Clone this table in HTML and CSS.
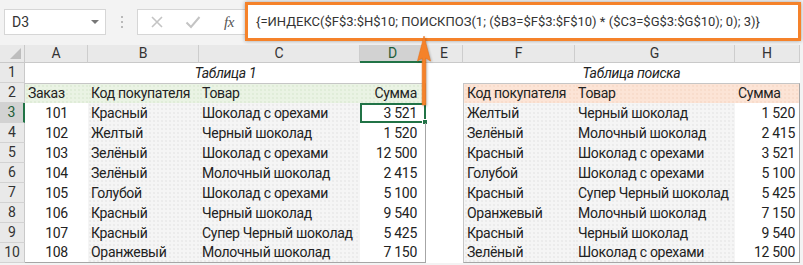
FILE: index.html
```html
<!DOCTYPE html>
<html lang="ru">
<head>
<meta charset="utf-8">
<link rel="stylesheet" href="styles.css">
</head>
<body>
<div class="app">
  <div class="toolbar">
    <div class="namebox"><span class="name">D3</span><span class="caret"></span></div>
    <div class="grip"><i></i><i></i><i></i></div>
    <div class="fxbox">
      <svg class="ico" width="14" height="14" viewBox="0 0 14 14"><path d="M2 2 L12 12 M12 2 L2 12" stroke="#c4c4c4" stroke-width="1.6" fill="none"/></svg>
      <svg class="ico" width="16" height="14" viewBox="0 0 16 14"><path d="M1.5 7.5 L6 12 L14.5 2" stroke="#c4c4c4" stroke-width="2" fill="none"/></svg>
      <span class="fx">fx</span>
    </div>
    <div class="formula">{=ИНДЕКС($F$3:$H$10; ПОИСКПОЗ(1; ($B3=$F$3:$F$10) * ($C3=$G$3:$G$10); 0); 3)}</div>
  </div>

  <div class="sheet">
    <div class="corner"><span class="tri"></span></div>
    <div class="ch">A</div><div class="ch">B</div><div class="ch">C</div><div class="ch sel">D</div><div class="ch">E</div><div class="ch">F</div><div class="ch">G</div><div class="ch">H</div>

    <div class="rh">1</div>
    <div class="c title t1span">Таблица 1</div>
    <div class="c"></div>
    <div class="c title t2span">Таблица поиска</div>

    <div class="rh">2</div>
    <div class="c g1 top">Заказ</div><div class="c g1 top">Код покупателя</div><div class="c g1 top">Товар</div><div class="c g1 top r1 num">Сумма</div>
    <div class="c"></div>
    <div class="c p2 top l2">Код покупателя</div><div class="c p2 top">Товар</div><div class="c p2 top r2">Сумма</div>

    <div class="rh sel">3</div>
    <div class="c ctr">101</div><div class="c dot">Красный</div><div class="c dot">Шоколад с орехами</div><div class="c num r1 active">3 521<span class="handle"></span></div>
    <div class="c"></div>
    <div class="c dot l2">Желтый</div><div class="c dot">Черный шоколад</div><div class="c num r2">1 520</div>

    <div class="rh">4</div>
    <div class="c ctr">102</div><div class="c dot">Желтый</div><div class="c dot">Черный шоколад</div><div class="c num r1">1 520</div>
    <div class="c"></div>
    <div class="c dot l2">Зелёный</div><div class="c dot">Молочный шоколад</div><div class="c num r2">2 415</div>

    <div class="rh">5</div>
    <div class="c ctr">103</div><div class="c dot">Зелёный</div><div class="c dot">Шоколад с орехами</div><div class="c num r1">12 500</div>
    <div class="c"></div>
    <div class="c dot l2">Красный</div><div class="c dot">Шоколад с орехами</div><div class="c num r2">3 521</div>

    <div class="rh">6</div>
    <div class="c ctr">104</div><div class="c dot">Зелёный</div><div class="c dot">Молочный шоколад</div><div class="c num r1">2 415</div>
    <div class="c"></div>
    <div class="c dot l2">Голубой</div><div class="c dot">Шоколад с орехами</div><div class="c num r2">5 100</div>

    <div class="rh">7</div>
    <div class="c ctr">105</div><div class="c dot">Голубой</div><div class="c dot">Шоколад с орехами</div><div class="c num r1">5 100</div>
    <div class="c"></div>
    <div class="c dot l2">Красный</div><div class="c dot">Супер Черный шоколад</div><div class="c num r2">5 425</div>

    <div class="rh">8</div>
    <div class="c ctr">106</div><div class="c dot">Красный</div><div class="c dot">Черный шоколад</div><div class="c num r1">9 540</div>
    <div class="c"></div>
    <div class="c dot l2">Оранжевый</div><div class="c dot">Молочный шоколад</div><div class="c num r2">7 150</div>

    <div class="rh">9</div>
    <div class="c ctr">107</div><div class="c dot">Красный</div><div class="c dot">Супер Черный шоколад</div><div class="c num r1">5 425</div>
    <div class="c"></div>
    <div class="c dot l2">Красный</div><div class="c dot">Черный шоколад</div><div class="c num r2">9 540</div>

    <div class="rh">10</div>
    <div class="c ctr bot">108</div><div class="c dot bot">Оранжевый</div><div class="c dot bot">Молочный шоколад</div><div class="c num r1 bot">7 150</div>
    <div class="c"></div>
    <div class="c dot l2 bot">Зелёный</div><div class="c dot bot">Шоколад с орехами</div><div class="c num r2 bot">12 500</div>
  </div>

  <svg class="arrow" width="24" height="74" viewBox="0 0 24 74">
    <path d="M12 1 L18.5 26 L13.8 23 L13.8 70 L10.2 70 L10.2 23 L5.5 26 Z" fill="#f5822a" stroke="#e9721a" stroke-width="0.6"/>
  </svg>
</div>
</body>
</html>
```
FILE: styles.css
```css
* { box-sizing: border-box; }
html, body { margin: 0; padding: 0; }
body {
  width: 803px;
  height: 265px;
  overflow: hidden;
  background: #f3f3f3;
  font-family: Roboto, "Noto Sans", sans-serif;
  font-size: 14px;
  letter-spacing: -0.3px;
  color: #222;
}
.app { position: relative; width: 803px; height: 265px; }

.toolbar {
  height: 45px;
  display: flex;
  align-items: flex-start;
  background: #f3f3f3;
}
.namebox {
  margin: 9px 0 0 4px;
  width: 102px;
  height: 26px;
  background: #fff;
  border: 1px solid #d6d6d6;
  display: flex;
  align-items: center;
  justify-content: space-between;
  padding: 0 6px 0 7px;
}
.name { font-size: 14px; color: #333; letter-spacing: 0; }
.caret {
  width: 0; height: 0;
  border-left: 4px solid transparent;
  border-right: 4px solid transparent;
  border-top: 4px solid #777;
}
.grip {
  width: 31px;
  height: 26px;
  margin-top: 9px;
  display: flex;
  flex-direction: column;
  align-items: center;
  justify-content: center;
  gap: 3px;
}
.grip i { display: block; width: 2px; height: 2px; background: #b9b9b9; }
.fxbox {
  margin-top: 9px;
  width: 108px;
  height: 26px;
  background: #fff;
  border: 1px solid #d6d6d6;
  border-right: none;
  display: flex;
  align-items: center;
  padding-left: 12px;
  gap: 21px;
}
.fx {
  font-family: "Liberation Serif", serif;
  font-style: italic;
  font-size: 15px;
  color: #555;
  letter-spacing: -0.5px;
  margin-left: 2px;
}
.formula {
  margin-top: 2px;
  width: 556px;
  height: 39px;
  background: #fff;
  border: 3px solid #f5822a;
  box-shadow: 0 0 4px rgba(0,0,0,0.35);
  padding: 0 0 0 8px;
  line-height: 33px;
  font-size: 13px;
  letter-spacing: 0;
  color: #333;
  white-space: nowrap;
}

.sheet {
  display: grid;
  grid-template-columns: 25px 63px 111px 161px 66px 37px 112px 160px 65px;
  grid-template-rows: 18px repeat(10, 20px);
  width: 800px;
  background: #fff;
}
.corner {
  background: #e9e9e9;
  border-right: 1px solid #c9c9c9;
  border-bottom: 1px solid #c9c9c9;
  position: relative;
}
.tri {
  position: absolute;
  right: 3px; bottom: 3px;
  width: 0; height: 0;
  border-left: 11px solid transparent;
  border-bottom: 11px solid #bdbdbd;
}
.ch {
  background: #e9e9e9;
  border-right: 1px solid #cdcdcd;
  border-bottom: 1px solid #c9c9c9;
  text-align: center;
  line-height: 17px;
  color: #333;
  letter-spacing: 0;
}
.ch.sel {
  background: #d2d2d2;
  border-bottom: 2px solid #217346;
  color: #1e5e38;
}
.rh {
  background: #e9e9e9;
  border-right: 1px solid #c9c9c9;
  border-bottom: 1px solid #d2d2d2;
  text-align: center;
  line-height: 19px;
  color: #333;
  letter-spacing: 0;
}
.rh.sel {
  background: #d2d2d2;
  border-right: 2px solid #217346;
  color: #1e5e38;
}

.c {
  padding: 0 3px;
  line-height: 20px;
  white-space: nowrap;
  position: relative;
  color: #222;
}
.title { font-style: italic; text-align: center; }
.t1span { grid-column: 2 / span 4; }
.t2span { grid-column: 7 / span 3; }

.dot {
  background-color: #f5f5f5;
  background-image: radial-gradient(circle, #ebebeb 0.7px, transparent 0.9px);
  background-size: 4px 4px;
}
.g1 {
  background-color: #eaf3e4;
  background-image: radial-gradient(circle, #e0ecd8 0.7px, transparent 0.9px);
  background-size: 4px 4px;
}
.p2 {
  background-color: #fce4d6;
  background-image: radial-gradient(circle, #f8dccb 0.7px, transparent 0.9px);
  background-size: 4px 4px;
}
.top { border-top: 1px solid #c6c6c6; line-height: 19px; }
.bot { border-bottom: 1px solid #a6a6a6; line-height: 19px; }
.r1 { border-right: 1px solid #a6a6a6; }
.r2 { border-right: 1px solid #a6a6a6; }
.l2 { border-left: 1px solid #c6c6c6; }
.num { text-align: right; padding-right: 8px; }
.r2.num { padding-right: 4px; }
.ctr { text-align: center; }

.active {
  border: 2px solid #217346;
  line-height: 16px;
  padding-right: 7px;
}
.handle {
  position: absolute;
  right: -4px;
  bottom: -4px;
  width: 6px;
  height: 6px;
  background: #217346;
  border: 1px solid #fff;
}

.arrow {
  position: absolute;
  left: 412px;
  top: 35px;
  filter: drop-shadow(1px 1px 1px rgba(0,0,0,0.25));
}
```
